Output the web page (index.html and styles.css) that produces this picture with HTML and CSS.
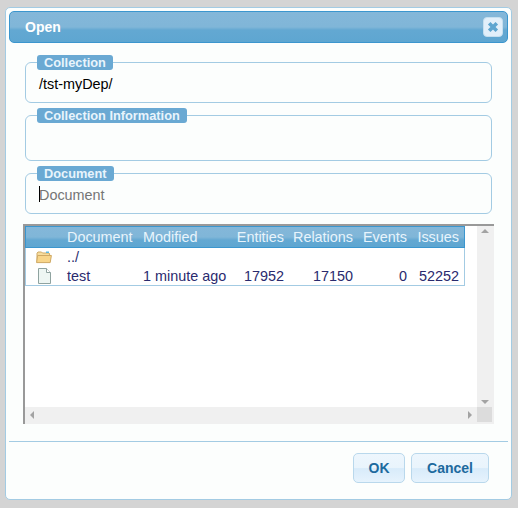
FILE: index.html
```html
<!DOCTYPE html>
<html lang="en">
<head>
  <meta charset="UTF-8">
  <title>Open</title>
  <link rel="stylesheet" href="styles.css">
</head>
<body>
<div class="dialog">
  <div class="titlebar">
    <span class="title">Open</span>
    <button class="close" type="button" aria-label="Close">
      <svg width="12" height="12" viewBox="0 0 12 12"><path d="M2.2 2.2L9.8 9.8M9.8 2.2L2.2 9.8" stroke="#5da5d0" stroke-width="3.6" fill="none"/></svg>
    </button>
  </div>
  <form class="content">
    <fieldset class="group group-collection">
      <legend>Collection</legend>
      <div class="value">/tst-myDep/</div>
    </fieldset>
    <fieldset class="group group-info">
      <legend>Collection Information</legend>
    </fieldset>
    <fieldset class="group group-document">
      <legend>Document</legend>
      <div class="value placeholder"><span class="caret"></span>Document</div>
    </fieldset>

    <div class="browser">
      <div class="browser-main">
        <table class="files">
          <thead>
            <tr>
              <th class="col-icon"></th>
              <th class="col-name">Document</th>
              <th class="col-mod">Modified</th>
              <th class="num col-ent">Entities</th>
              <th class="num col-rel">Relations</th>
              <th class="num col-evt">Events</th>
              <th class="num col-iss">Issues</th>
            </tr>
          </thead>
          <tbody>
            <tr class="row-up">
              <td class="col-icon">
                <svg width="16" height="13" viewBox="0 0 16 13">
                  <path d="M1 11.5V2.2L2 1h3.5l1 1H13l.6.8V4" fill="#f6dc9e" stroke="#cfa964"/>
                  <path d="M10 .5h3v1.5h-3z" fill="#5bb7e0"/>
                  <path d="M.6 11.6L1.6 4.5h13.8l-1.2 7.1z" fill="#f8d58a" stroke="#cfa964"/>
                </svg>
              </td>
              <td>../</td><td></td><td></td><td></td><td></td><td></td>
            </tr>
            <tr>
              <td class="col-icon">
                <svg class="doc-icon" width="13" height="16" viewBox="0 0 13 16">
                  <path d="M.5.5h8l4 4v11H.5z" fill="#eef6f3" stroke="#8fa3a0"/>
                  <path d="M8.5.5v4h4" fill="#fff" stroke="#8fa3a0"/>
                </svg>
              </td>
              <td>test</td>
              <td>1 minute ago</td>
              <td class="num">17952</td>
              <td class="num">17150</td>
              <td class="num">0</td>
              <td class="num">52252</td>
            </tr>
          </tbody>
        </table>
        <div class="vscroll">
          <span class="arrow arrow-up"></span>
          <span class="arrow arrow-down"></span>
        </div>
      </div>
      <div class="hscroll">
        <div class="hscroll-track">
          <span class="arrow arrow-left"></span>
          <span class="arrow arrow-right"></span>
        </div>
        <div class="hscroll-corner"></div>
      </div>
    </div>
  </form>
  <div class="buttons">
    <button class="btn btn-ok" type="button">OK</button>
    <button class="btn btn-cancel" type="button">Cancel</button>
  </div>
</div>
</body>
</html>
```
FILE: styles.css
```css
* {
  margin: 0;
  padding: 0;
  box-sizing: border-box;
  font-family: "Liberation Sans", Arial, sans-serif;
}

body {
  background-color: #d4d4d4;
  height: 508px;
  overflow: hidden;
  padding: 7px 6px 8px 5px;
}

.dialog {
  background: #fcfefd;
  border: 1px solid #a3cbe3;
  border-radius: 5px;
  height: 493px;
  padding: 3px;
  display: flex;
  flex-direction: column;
}

.titlebar {
  height: 32px;
  background: linear-gradient(#84b7d9 0, #80b6d8 50%, #63a8d2 60%, #5ea6d1 100%);
  border: 1px solid #3b96ce;
  border-radius: 5px;
  display: flex;
  align-items: center;
  justify-content: space-between;
  padding: 0 4px 0 15px;
  flex: none;
}

.title {
  color: #fff;
  font-size: 14px;
  font-weight: bold;
}

.close {
  width: 20px;
  height: 20px;
  background: #e1effa;
  border: 1px solid #c5dfef;
  border-radius: 4px;
  display: flex;
  align-items: center;
  justify-content: center;
}

.content {
  flex: 1;
  padding: 12px 16px 0 14px;
}

.group {
  border: 1px solid #a3cbe3;
  border-radius: 6px;
  margin: 0 0 0 2px;
  padding: 0 13px;
}

.group legend {
  background: #6aa9d3;
  color: #e8f4fc;
  font-size: 12.8px;
  font-weight: bold;
  line-height: 15px;
  height: 15px;
  border-radius: 3px;
  padding: 0 7px;
  margin-left: -2px;
}

.group-collection { height: 48px; }
.group-info { height: 53px; margin-top: 5px; }
.group-document { height: 48px; margin-top: 5px; }

.value {
  font-size: 14.4px;
  color: #000;
  line-height: 16px;
  padding-top: 6px;
}

.placeholder {
  color: #757575;
  position: relative;
}

.caret {
  position: absolute;
  left: 0;
  top: 5px;
  width: 1px;
  height: 16px;
  background: #000;
}

.browser {
  margin-top: 10px;
  width: 471px;
  height: 200px;
  border-top: 2px solid #999;
  border-left: 2px solid #999;
  background: #fff;
  display: flex;
  flex-direction: column;
}

.browser-main {
  flex: 1;
  display: flex;
  justify-content: space-between;
  align-items: flex-start;
  min-height: 0;
}

.files {
  width: 440px;
  border-collapse: separate;
  border-spacing: 0;
  table-layout: fixed;
  font-size: 14.4px;
  color: #2a2a6e;
}

.files th {
  height: 22px;
  background: linear-gradient(#84b7d9 0, #80b6d8 50%, #63a8d2 65%, #5ea6d1 100%);
  border-top: 1px solid #3b96ce;
  border-bottom: 1px solid #3b96ce;
  color: #e8f4fc;
  font-weight: normal;
  text-align: left;
  white-space: nowrap;
  padding: 0 5px 0 0;
}

.files th:first-child { border-left: 1px solid #3b96ce; }
.files th:last-child { border-right: 1px solid #3b96ce; }

.files td {
  height: 19px;
  padding: 0 5px 0 0;
  white-space: nowrap;
}

.files td:first-child { border-left: 1px solid #a3cbe3; }
.files td:last-child { border-right: 1px solid #a3cbe3; }
.files tbody tr:last-child td { height: 20px; border-bottom: 1px solid #a3cbe3; }

.files .row-up td { height: 18px; }

.files .num { text-align: right; }

.files td.col-icon { text-align: left; padding-left: 10px; }
.files td.col-icon svg { display: block; }
.files td.col-icon .doc-icon { margin-left: 2px; }

.col-icon { width: 42px; }
.col-name { width: 76px; }
.col-mod { width: 88px; }
.col-ent { width: 58px; }
.col-rel { width: 69px; }
.col-evt { width: 54px; }
.col-iss { width: 53px; }

.vscroll {
  width: 17px;
  align-self: stretch;
  background: #f0f0f0;
  position: relative;
}

.hscroll {
  height: 17px;
  background: #f0f0f0;
  display: flex;
  flex: none;
}

.hscroll-track {
  flex: 1;
  position: relative;
}

.hscroll-corner {
  width: 15px;
  height: 15px;
  margin-right: 2px;
  background: #dcdcdc;
}

.arrow {
  position: absolute;
  width: 0;
  height: 0;
  border: 4px solid transparent;
}

.arrow-up {
  top: 3px;
  left: 4px;
  border-top: none;
  border-bottom-color: #a3a3a3;
}

.arrow-down {
  bottom: 3px;
  left: 4px;
  border-bottom: none;
  border-top-color: #a3a3a3;
}

.arrow-left {
  left: 5px;
  top: 4px;
  border-left: none;
  border-right-color: #a3a3a3;
}

.arrow-right {
  right: 5px;
  top: 4px;
  border-right: none;
  border-left-color: #a3a3a3;
}

.buttons {
  flex: none;
  height: 55px;
  border-top: 1px solid #a3cbe3;
  display: flex;
  justify-content: flex-end;
  gap: 6px;
  padding: 11px 19px 0 0;
}

.btn {
  height: 30px;
  background: linear-gradient(#edf6fd 0, #e9f4fc 50%, #d8ebfa 52%, #e6f3fd 100%);
  border: 1px solid #b9d8ec;
  border-radius: 5px;
  color: #1d6a9e;
  font-size: 14px;
  font-weight: bold;
}

.btn-ok { width: 52px; }
.btn-cancel { width: 78px; }
```
